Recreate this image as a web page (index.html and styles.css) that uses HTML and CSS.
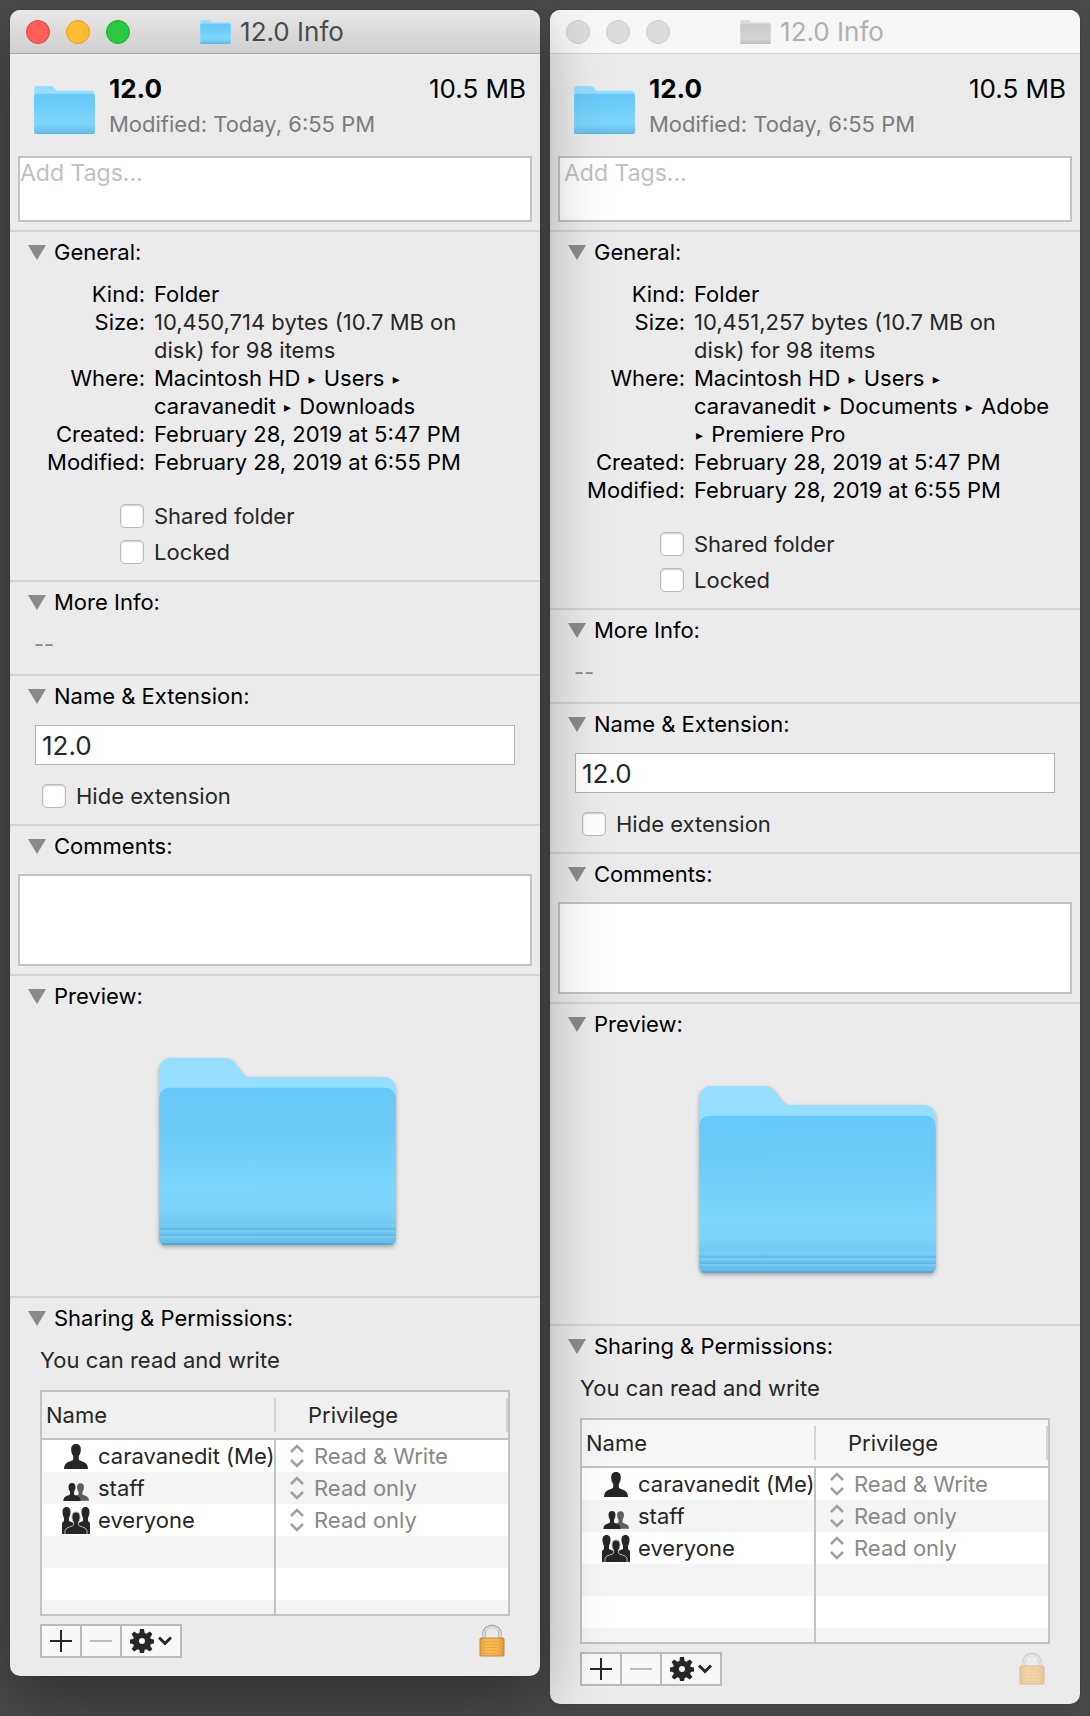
FILE: index.html
```html
<!DOCTYPE html>
<html lang="en">
<head>
    <meta charset="UTF-8">
    <meta name="viewport" content="width=device-width, initial-scale=1.0">
    <title>12.0 Info</title>
    <link rel="stylesheet" href="styles.css">
</head>
<body>
    <svg class="sprite" aria-hidden="true">
        <defs>
            <linearGradient id="front" x1="0" y1="0" x2="0" y2="1">
                <stop offset="0" stop-color="#66c8f8"/>
                <stop offset="0.25" stop-color="#6dcbf8"/>
                <stop offset="0.65" stop-color="#7cd5fc"/>
                <stop offset="0.78" stop-color="#7bd3fa"/>
                <stop offset="1" stop-color="#63bbe8"/>
            </linearGradient>
            <linearGradient id="brass" x1="0" y1="0" x2="1" y2="0">
                <stop offset="0" stop-color="#e59a35"/>
                <stop offset="0.3" stop-color="#fdbd55"/>
                <stop offset="0.7" stop-color="#fbb54a"/>
                <stop offset="1" stop-color="#de9130"/>
            </linearGradient>
            <symbol id="folder" viewBox="0 0 238 188">
                <path d="M0 14Q0 0 14 0H66Q73 0 77 6L84 15Q87 19 93 19H224Q238 19 238 33V100H0Z" fill="#95deff"/>
                <path d="M0 42Q0 30 12 30H226Q238 30 238 42V181Q238 188 231 188H7Q0 188 0 181Z" fill="url(#front)"/>
                <path d="M0 168H238M0 174H238M0 180H238" stroke="#80cdf3" stroke-width="1.5"/>
                <path d="M0 172H238M0 178H238" stroke="#57b2e2" stroke-width="1"/>
                <path d="M3 187H235" stroke="#4fa3d0" stroke-width="1.5"/>
            </symbol>
            <symbol id="person" viewBox="0 0 24 25">
                <path d="M12 0C15.500 0 17 2.400 16.800 6C16.700 9 15.800 10.500 14.800 12V15.500C16 17.500 22 17.500 23.300 21.500Q24 23 24 25H0Q0 23 .7 21.500C2 17.500 8 17.500 9.200 15.500V12C8.200 10.500 7.300 9 7.200 6C7 2.400 8.500 0 12 0Z"/>
            </symbol>
            <symbol id="gear" viewBox="0 0 24 24">
                <path fill-rule="evenodd" d="M10 0h4l.6 4 1.900 .8 3.300-2.400 2.600 2.700-2.200 3.300 .7 1.700 3.100 .5v3.800l-3.100 .5-.8 1.900 2.300 3.100-2.700 2.700-3.200-2.300-1.900 .8-.6 2.900h-4l-.6-2.900-1.900-.8-3.200 2.300-2.700-2.700 2.300-3.100-.8-1.900-3.100-.5v-3.800l3.100-.5 .7-1.700-2.200-3.300 2.600-2.700 3.300 2.400 1.900-.8zM12 9a3 3 0 1 0 0 6a3 3 0 1 0 0-6z"/>
            </symbol>
            <symbol id="updown" viewBox="0 0 14 24">
                <path d="M1 8L7 2L13 8M1 16L7 22L13 16" fill="none" stroke="#a0a0a0" stroke-width="2.500"/>
            </symbol>
            <symbol id="group" viewBox="0 0 28 27">
                <path d="M4.500 0C7.500 0 8.800 2.400 8.500 5.500C8.400 8 7.500 9.500 7 11V14L14 17L21 14V11C20.500 9.500 19.600 8 19.500 5.500C19.200 2.400 20.500 0 23.500 0C26.500 0 27.600 2.400 27.500 5.500C27.400 8 26.500 9.500 26 11V14L28 16V27H0V16L2 14V11C1.500 9.500 .6 8 .5 5.500C.4 2.400 1.500 0 4.500 0Z"/>
                <path d="M14 5C17 5 18.200 7.200 18 10.200C18 13 17 14 16.500 15V18C17.500 20 23 19.500 25 23V28H3V23C5 19.500 10.500 20 11.500 18V15C11 14 10 13 10 10.200C9.800 7.200 11 5 14 5Z" stroke="#b5b5b5" stroke-width="1"/>
            </symbol>
            <symbol id="lock" viewBox="0 0 26 34">
                <path d="M5 17V10.500C5 -.5 21 -.5 21 10.500V17" fill="none" stroke="#a8adb0" stroke-width="3.500"/>
                <path d="M5 17V10.500C5 .5 21 .5 21 10.500V17" fill="none" stroke="#e3e8ea" stroke-width="1.500"/>
                <rect x="1" y="14" width="24" height="18" rx="1" fill="url(#brass)" stroke="#c08a3c" stroke-width="1"/>
                <path d="M2 17.500H24M2 20.500H24M2 23.500H24M2 26.500H24M2 29.500H24" stroke="#e8a645" stroke-width="1"/>
            </symbol>
        </defs>
    </svg>

    <main class="desktop">
        <section class="window active">
            <header class="titlebar">
                <div class="lights">
                    <button class="light close" aria-label="Close"></button>
                    <button class="light minimize" aria-label="Minimize"></button>
                    <button class="light zoom" aria-label="Zoom"></button>
                </div>
                <h1 class="title"><svg class="title-icon"><use href="#folder"/></svg>12.0 Info</h1>
            </header>

            <div class="summary">
                <svg class="summary-icon"><use href="#folder"/></svg>
                <div class="summary-text">
                    <div class="summary-line"><strong>12.0</strong><span>10.5 MB</span></div>
                    <p class="muted">Modified: Today, 6:55 PM</p>
                </div>
            </div>
            <textarea class="box tags" placeholder="Add Tags..." aria-label="Tags"></textarea>

            <details class="section" open>
                <summary>General:</summary>
                <dl class="facts">
                    <dt>Kind:</dt><dd>Folder</dd>
                    <dt>Size:</dt><dd class="soft">10,450,714 bytes (10.7 MB on disk) for 98 items</dd>
                    <dt>Where:</dt><dd>Macintosh HD <span class="sep">▸</span> Users <span class="sep">▸</span> caravanedit <span class="sep">▸</span> Downloads</dd>
                    <dt>Created:</dt><dd>February 28, 2019 at 5:47 PM</dd>
                    <dt>Modified:</dt><dd>February 28, 2019 at 6:55 PM</dd>
                </dl>
                <div class="checks">
                    <label class="check"><input type="checkbox">Shared folder</label>
                    <label class="check"><input type="checkbox">Locked</label>
                </div>
            </details>

            <details class="section" open>
                <summary>More Info:</summary>
                <p class="more">--</p>
            </details>

            <details class="section" open>
                <summary>Name &amp; Extension:</summary>
                <div class="name">
                    <input class="name-field" type="text" value="12.0" aria-label="Name">
                    <label class="check"><input type="checkbox">Hide extension</label>
                </div>
            </details>

            <details class="section" open>
                <summary>Comments:</summary>
                <textarea class="box comments" aria-label="Comments"></textarea>
            </details>

            <details class="section" open>
                <summary>Preview:</summary>
                <div class="preview"><svg class="preview-icon"><use href="#folder"/></svg></div>
            </details>

            <details class="section" open>
                <summary>Sharing &amp; Permissions:</summary>
                <div class="sharing">
                    <p class="soft">You can read and write</p>
                    <div class="table-frame">
                        <table class="privileges">
                            <thead>
                                <tr><th>Name</th><th>Privilege</th></tr>
                            </thead>
                            <tbody>
                                <tr>
                                    <td><div class="user"><svg class="user-icon"><use href="#person" x="2" y="1" width="24" height="25"/></svg>caravanedit (Me)</div></td>
                                    <td><div class="privilege"><svg class="updown"><use href="#updown"/></svg><select aria-label="Privilege for caravanedit" disabled><option>Read &amp; Write</option></select></div></td>
                                </tr>
                                <tr>
                                    <td><div class="user"><svg class="user-icon"><use class="back" href="#person" x="10" y="8" width="17" height="18"/><use href="#person" x="1" y="8" width="18" height="18"/></svg>staff</div></td>
                                    <td><div class="privilege"><svg class="updown"><use href="#updown"/></svg><select aria-label="Privilege for staff" disabled><option>Read only</option></select></div></td>
                                </tr>
                                <tr>
                                    <td><div class="user"><svg class="user-icon"><use href="#group"/></svg>everyone</div></td>
                                    <td><div class="privilege"><svg class="updown"><use href="#updown"/></svg><select aria-label="Privilege for everyone" disabled><option>Read only</option></select></div></td>
                                </tr>
                                <tr><td></td><td></td></tr>
                                <tr><td></td><td></td></tr>
                                <tr><td></td><td></td></tr>
                            </tbody>
                        </table>
                    </div>
                    <div class="actions">
                        <div class="buttons">
                            <button aria-label="Add"><svg width="22" height="22"><path d="M11 0V22M0 11H22" stroke="#262626" stroke-width="2"/></svg></button>
                            <button aria-label="Remove" disabled><svg width="22" height="22"><path d="M0 11H22" stroke="#bdbdbd" stroke-width="2"/></svg></button>
                            <button class="wide" aria-label="Actions"><svg width="24" height="24"><use href="#gear"/></svg><svg width="14" height="10"><path d="M1 1.500L7 7.500L13 1.500" fill="none" stroke="#262626" stroke-width="3"/></svg></button>
                        </div>
                        <svg class="lock"><use href="#lock"/></svg>
                    </div>
                </div>
            </details>
        </section>

        <section class="window inactive">
            <header class="titlebar">
                <div class="lights">
                    <button class="light" aria-label="Close"></button>
                    <button class="light" aria-label="Minimize"></button>
                    <button class="light" aria-label="Zoom"></button>
                </div>
                <h1 class="title"><svg class="title-icon"><use href="#folder"/></svg>12.0 Info</h1>
            </header>

            <div class="summary">
                <svg class="summary-icon"><use href="#folder"/></svg>
                <div class="summary-text">
                    <div class="summary-line"><strong>12.0</strong><span>10.5 MB</span></div>
                    <p class="muted">Modified: Today, 6:55 PM</p>
                </div>
            </div>
            <textarea class="box tags" placeholder="Add Tags..." aria-label="Tags"></textarea>

            <details class="section" open>
                <summary>General:</summary>
                <dl class="facts">
                    <dt>Kind:</dt><dd>Folder</dd>
                    <dt>Size:</dt><dd class="soft">10,451,257 bytes (10.7 MB on disk) for 98 items</dd>
                    <dt>Where:</dt><dd>Macintosh HD <span class="sep">▸</span> Users <span class="sep">▸</span> caravanedit <span class="sep">▸</span> Documents <span class="sep">▸</span> Adobe <span class="sep">▸</span> Premiere Pro</dd>
                    <dt>Created:</dt><dd>February 28, 2019 at 5:47 PM</dd>
                    <dt>Modified:</dt><dd>February 28, 2019 at 6:55 PM</dd>
                </dl>
                <div class="checks">
                    <label class="check"><input type="checkbox">Shared folder</label>
                    <label class="check"><input type="checkbox">Locked</label>
                </div>
            </details>

            <details class="section" open>
                <summary>More Info:</summary>
                <p class="more">--</p>
            </details>

            <details class="section" open>
                <summary>Name &amp; Extension:</summary>
                <div class="name">
                    <input class="name-field" type="text" value="12.0" aria-label="Name">
                    <label class="check"><input type="checkbox">Hide extension</label>
                </div>
            </details>

            <details class="section" open>
                <summary>Comments:</summary>
                <textarea class="box comments" aria-label="Comments"></textarea>
            </details>

            <details class="section" open>
                <summary>Preview:</summary>
                <div class="preview"><svg class="preview-icon"><use href="#folder"/></svg></div>
            </details>

            <details class="section" open>
                <summary>Sharing &amp; Permissions:</summary>
                <div class="sharing">
                    <p class="soft">You can read and write</p>
                    <div class="table-frame">
                        <table class="privileges">
                            <thead>
                                <tr><th>Name</th><th>Privilege</th></tr>
                            </thead>
                            <tbody>
                                <tr>
                                    <td><div class="user"><svg class="user-icon"><use href="#person" x="2" y="1" width="24" height="25"/></svg>caravanedit (Me)</div></td>
                                    <td><div class="privilege"><svg class="updown"><use href="#updown"/></svg><select aria-label="Privilege for caravanedit" disabled><option>Read &amp; Write</option></select></div></td>
                                </tr>
                                <tr>
                                    <td><div class="user"><svg class="user-icon"><use class="back" href="#person" x="10" y="8" width="17" height="18"/><use href="#person" x="1" y="8" width="18" height="18"/></svg>staff</div></td>
                                    <td><div class="privilege"><svg class="updown"><use href="#updown"/></svg><select aria-label="Privilege for staff" disabled><option>Read only</option></select></div></td>
                                </tr>
                                <tr>
                                    <td><div class="user"><svg class="user-icon"><use href="#group"/></svg>everyone</div></td>
                                    <td><div class="privilege"><svg class="updown"><use href="#updown"/></svg><select aria-label="Privilege for everyone" disabled><option>Read only</option></select></div></td>
                                </tr>
                                <tr><td></td><td></td></tr>
                                <tr><td></td><td></td></tr>
                                <tr><td></td><td></td></tr>
                            </tbody>
                        </table>
                    </div>
                    <div class="actions">
                        <div class="buttons">
                            <button aria-label="Add"><svg width="22" height="22"><path d="M11 0V22M0 11H22" stroke="#262626" stroke-width="2"/></svg></button>
                            <button aria-label="Remove" disabled><svg width="22" height="22"><path d="M0 11H22" stroke="#bdbdbd" stroke-width="2"/></svg></button>
                            <button class="wide" aria-label="Actions"><svg width="24" height="24"><use href="#gear"/></svg><svg width="14" height="10"><path d="M1 1.500L7 7.500L13 1.500" fill="none" stroke="#262626" stroke-width="3"/></svg></button>
                        </div>
                        <svg class="lock"><use href="#lock"/></svg>
                    </div>
                </div>
            </details>
        </section>
    </main>
</body>
</html>
```

FILE: styles.css
```css
* {
    box-sizing: border-box;
}
body {
    margin: 0;
    background: #4a4a4a;
    font-family: Inter, "Liberation Sans", sans-serif;
    font-size: 22px;
    line-height: 28px;
    color: #000;
}
h1, p, dl, dd {
    margin: 0;
}
button, input, textarea, select {
    font: inherit;
    color: inherit;
}
svg {
    display: block;
    flex: none;
}
.sprite {
    position: absolute;
    width: 0;
    height: 0;
}
.desktop {
    display: flex;
    align-items: flex-start;
    gap: 10px;
    padding: 10px;
    min-height: 100vh;
}
.window {
    flex: 1;
    min-width: 0;
    background: #ebebeb;
    border-radius: 10px;
    box-shadow: 0 0 1px rgba(0, 0, 0, 0.6), 0 8px 24px rgba(0, 0, 0, 0.1);
}
.window.active {
    position: relative;
    box-shadow: 0 0 1px rgba(0, 0, 0, 0.6), 0 24px 64px rgba(0, 0, 0, 0.35);
}

/* title bar */
.titlebar {
    display: grid;
    grid-template-columns: 1fr auto 1fr;
    align-items: center;
    height: 44px;
    padding: 0 22px 0 16px;
    border-bottom: 1px solid #d4d4d4;
    border-radius: 10px 10px 0 0;
    background: #f6f6f6;
    color: #b1b1b1;
}
.active .titlebar {
    background: linear-gradient(#e8e8e8, #cfcfcf);
    border-bottom-color: #a8a8a8;
    color: #4a4a4a;
}
.lights {
    display: flex;
    gap: 16px;
}
.light {
    width: 24px;
    height: 24px;
    padding: 0;
    border: 1px solid #cdcdcd;
    border-radius: 50%;
    background: #dcdcdc;
}
.light.close {
    background: #ff5f57;
    border-color: #e2463f;
}
.light.minimize {
    background: #febc2e;
    border-color: #dfa023;
}
.light.zoom {
    background: #28c840;
    border-color: #1dad2b;
}
.title {
    display: flex;
    align-items: center;
    gap: 9px;
    font-size: 26px;
    font-weight: 400;
}
.title-icon {
    width: 31px;
    height: 24px;
}
.inactive .title-icon {
    filter: grayscale(1);
    opacity: 0.7;
}

/* file summary */
.summary {
    display: flex;
    align-items: center;
    gap: 14px;
    padding: 21px 14px 17px 24px;
}
.summary-icon {
    width: 61px;
    height: 48px;
    margin-top: 5px;
}
.summary-text {
    flex: 1;
}
.summary-line {
    display: flex;
    justify-content: space-between;
    margin-bottom: 7px;
    font-size: 26px;
}
.muted {
    margin-bottom: 1px;
    color: #7b7b7b;
}
.box {
    display: block;
    width: calc(100% - 16px);
    margin: 0 8px 8px;
    padding: 0;
    border: 2px solid #c3c3c3;
    background: #fff;
    resize: none;
    outline: none;
}
.box::placeholder {
    color: #c0c0c0;
}
.tags {
    height: 66px;
    padding: 1px 0;
    font-size: 23px;
}
.inactive .tags {
    padding-left: 4px;
}
.comments {
    height: 92px;
}

/* collapsible sections */
.section {
    border-top: 2px solid #d4d4d4;
}
.section summary {
    display: flex;
    align-items: center;
    gap: 8px;
    margin-bottom: 14px;
    padding: 6px 18px 0;
    list-style: none;
}
.section summary::-webkit-details-marker {
    display: none;
}
.section summary::before {
    content: "";
    border: 9px solid transparent;
    border-top: 15px solid #8a8a8a;
    border-bottom: 0;
}
.soft {
    color: #262626;
}
.facts {
    display: grid;
    grid-template-columns: 135px 1fr;
    column-gap: 9px;
    padding-right: 30px;
}
.facts dt {
    text-align: right;
}
.sep {
    margin: 0 2px;
    font-family: "DejaVu Sans", sans-serif;
    font-size: 14px;
    line-height: 1;
    vertical-align: 2px;
}
.checks {
    display: grid;
    gap: 12px;
    padding: 28px 16px 16px 110px;
}
.check {
    display: flex;
    align-items: center;
    gap: 10px;
    height: 24px;
    color: #262626;
}
.check input {
    appearance: none;
    width: 24px;
    height: 24px;
    margin: 0;
    border: 1px solid #b9b9b9;
    border-radius: 5px;
    background: #fff;
    box-shadow: inset 0 1px 2px rgba(0, 0, 0, 0.2);
}
.more {
    padding: 0 24px 16px;
    color: #8a8a8a;
}
.name {
    padding: 1px 25px 16px;
}
.name-field {
    display: block;
    width: 100%;
    height: 40px;
    padding: 0 6px;
    border: 1px solid #b3b3b3;
    background: #fff;
    color: #262626;
    font-size: 26px;
}
.name .check {
    margin: 19px 7px 0;
}
.preview {
    display: flex;
    justify-content: center;
    padding: 34px 0 51px 4px;
}
.preview-icon {
    width: 237px;
    height: 187px;
    filter: drop-shadow(0 2px 2px rgba(0, 0, 0, 0.3));
}

/* permissions */
.sharing {
    padding: 0 30px 18px;
}
.table-frame {
    height: 226px;
    margin: 16px 0 8px;
    border: 2px solid #c3c3c3;
    overflow: hidden;
}
.privileges {
    width: 100%;
    table-layout: fixed;
    border-collapse: separate;
    border-spacing: 0;
    color: #262626;
}
.privileges th {
    height: 48px;
    padding: 0 4px;
    border-bottom: 2px solid #c3c3c3;
    background: linear-gradient(#d4d4d4, #d4d4d4) right center / 2px 34px no-repeat #f0f0f0;
    font-weight: 400;
    text-align: left;
}
.inactive .privileges th {
    background-color: #f6f6f6;
}
.privileges th:first-child {
    width: 234px;
}
.privileges th + th {
    padding-left: 32px;
}
.privileges td {
    height: 32px;
    padding: 0;
    background: #fff;
}
.privileges td:first-child {
    border-right: 2px solid #c3c3c3;
}
.privileges tr:nth-child(even) td {
    background: #f4f4f4;
}
.user {
    display: flex;
    align-items: center;
    gap: 8px;
    padding-left: 20px;
    white-space: nowrap;
}
.user-icon {
    width: 28px;
    height: 27px;
    fill: #262626;
}
.back {
    fill: #5e5e5e;
}
.privilege {
    display: flex;
    align-items: center;
    gap: 10px;
    padding-left: 14px;
}
.updown {
    width: 14px;
    height: 24px;
}
.privilege select {
    appearance: none;
    padding: 0;
    border: 0;
    background: none;
    color: #888;
    opacity: 1;
}
.actions {
    display: flex;
    align-items: center;
    justify-content: space-between;
    padding-right: 5px;
}
.buttons {
    display: flex;
    border: 2px solid #bababa;
}
.buttons button {
    display: flex;
    align-items: center;
    justify-content: center;
    gap: 4px;
    width: 40px;
    height: 30px;
    padding: 0;
    border: 0;
    border-right: 2px solid #bababa;
    background: #f8f8f8;
    fill: #262626;
}
.buttons .wide {
    width: 58px;
    border-right: 0;
}
.lock {
    width: 26px;
    height: 34px;
}
.inactive .lock {
    opacity: 0.45;
}
```
